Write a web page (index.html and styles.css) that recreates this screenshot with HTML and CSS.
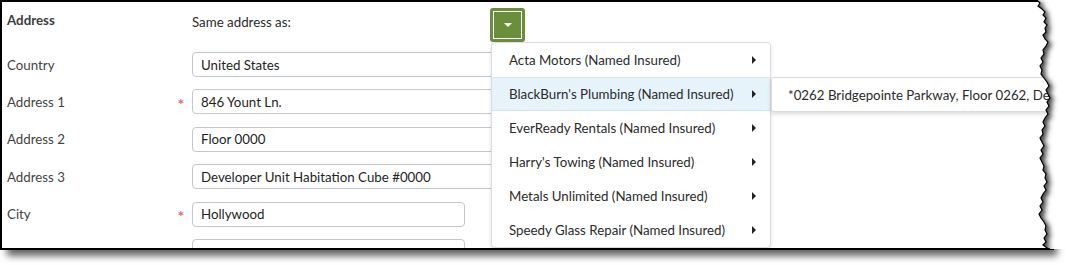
FILE: index.html
```html
<!DOCTYPE html>
<html>
<head>
<meta charset="utf-8">
<link rel="stylesheet" href="styles.css">
</head>
<body>
<div class="wrap">
  <div class="frame">
    <div class="head">
      <div class="section">Address</div>
      <div class="same">Same address as:</div>
      <div class="dd">
        <button class="ddbtn"><span class="caret"></span></button>
        <ul class="menu">
          <li class="item"><span>Acta Motors (Named Insured)</span><i class="arrow"></i></li>
          <li class="item active"><span>BlackBurn's Plumbing (Named Insured)</span><i class="arrow"></i>
            <div class="sub">*0262 Bridgepointe Parkway, Floor 0262, De</div>
          </li>
          <li class="item"><span>EverReady Rentals (Named Insured)</span><i class="arrow"></i></li>
          <li class="item"><span>Harry's Towing (Named Insured)</span><i class="arrow"></i></li>
          <li class="item"><span>Metals Unlimited (Named Insured)</span><i class="arrow"></i></li>
          <li class="item"><span>Speedy Glass Repair (Named Insured)</span><i class="arrow"></i></li>
        </ul>
      </div>
    </div>
    <div class="fields">
      <div class="label">Country</div><div class="req"></div><div class="input wide">United States</div>
      <div class="label">Address 1</div><div class="req">*</div><div class="input wide">846 Yount Ln.</div>
      <div class="label">Address 2</div><div class="req"></div><div class="input wide">Floor 0000</div>
      <div class="label">Address 3</div><div class="req"></div><div class="input wide">Developer Unit Habitation Cube #0000</div>
      <div class="label">City</div><div class="req">*</div><div class="input city">Hollywood</div>
      <div class="label"></div><div class="req"></div><div class="input city"></div>
    </div>
  </div>
  <svg class="torn" viewBox="1000 0 68 265" width="68" height="265" xmlns="http://www.w3.org/2000/svg">
    <defs>
      <clipPath id="coverClip">
        <polygon points="1037,0 1040,3 1038,6 1042,9 1045,12 1043,15 1046,18 1044,22 1047,25 1045,28 1046,32 1043,35 1045,39 1048,42 1046,46 1043,50 1044,54 1041,58 1043,62 1040,66 1042,70 1041,74 1044,78 1047,82 1049,86 1046,90 1048,94 1050,98 1047,102 1049,106 1046,110 1048,114 1045,118 1043,122 1045,126 1042,130 1043,134 1040,138 1042,142 1044,146 1041,150 1043,154 1040,158 1042,162 1044,166 1043,170 1046,174 1045,178 1047,182 1044,186 1046,190 1043,194 1041,198 1043,202 1040,206 1042,210 1039,214 1041,218 1044,222 1046,226 1045,230 1047,234 1044,238 1046,242 1043,245 1047,248 1050,249 1068,249 1068,0"/>
      </clipPath>
      <filter id="blur" filterUnits="userSpaceOnUse" x="990" y="-20" width="90" height="300">
        <feGaussianBlur stdDeviation="2.5"/>
      </filter>
    </defs>
    <polygon class="cover" points="1037,0 1040,3 1038,6 1042,9 1045,12 1043,15 1046,18 1044,22 1047,25 1045,28 1046,32 1043,35 1045,39 1048,42 1046,46 1043,50 1044,54 1041,58 1043,62 1040,66 1042,70 1041,74 1044,78 1047,82 1049,86 1046,90 1048,94 1050,98 1047,102 1049,106 1046,110 1048,114 1045,118 1043,122 1045,126 1042,130 1043,134 1040,138 1042,142 1044,146 1041,150 1043,154 1040,158 1042,162 1044,166 1043,170 1046,174 1045,178 1047,182 1044,186 1046,190 1043,194 1041,198 1043,202 1040,206 1042,210 1039,214 1041,218 1044,222 1046,226 1045,230 1047,234 1044,238 1046,242 1043,245 1047,248 1050,249 1068,249 1068,0"/>
    <g clip-path="url(#coverClip)">
      <polygon class="shade" filter="url(#blur)" transform="translate(4,2)" points="1037,0 1040,3 1038,6 1042,9 1045,12 1043,15 1046,18 1044,22 1047,25 1045,28 1046,32 1043,35 1045,39 1048,42 1046,46 1043,50 1044,54 1041,58 1043,62 1040,66 1042,70 1041,74 1044,78 1047,82 1049,86 1046,90 1048,94 1050,98 1047,102 1049,106 1046,110 1048,114 1045,118 1043,122 1045,126 1042,130 1043,134 1040,138 1042,142 1044,146 1041,150 1043,154 1040,158 1042,162 1044,166 1043,170 1046,174 1045,178 1047,182 1044,186 1046,190 1043,194 1041,198 1043,202 1040,206 1042,210 1039,214 1041,218 1044,222 1046,226 1045,230 1047,234 1044,238 1046,242 1043,245 1047,248 1050,249 1000,249 1000,0"/>
    </g>
    <polyline class="edge" points="1037,0 1040,3 1038,6 1042,9 1045,12 1043,15 1046,18 1044,22 1047,25 1045,28 1046,32 1043,35 1045,39 1048,42 1046,46 1043,50 1044,54 1041,58 1043,62 1040,66 1042,70 1041,74 1044,78 1047,82 1049,86 1046,90 1048,94 1050,98 1047,102 1049,106 1046,110 1048,114 1045,118 1043,122 1045,126 1042,130 1043,134 1040,138 1042,142 1044,146 1041,150 1043,154 1040,158 1042,162 1044,166 1043,170 1046,174 1045,178 1047,182 1044,186 1046,190 1043,194 1041,198 1043,202 1040,206 1042,210 1039,214 1041,218 1044,222 1046,226 1045,230 1047,234 1044,238 1046,242 1043,245 1047,248 1050,249"/>
  </svg>
</div>
</body>
</html>
```

FILE: styles.css
```css
html, body {
  margin: 0;
  padding: 0;
  background: #fff;
}
body {
  font-family: Lato, "Open Sans", sans-serif;
  font-size: 13.3px;
  color: #333;
  width: 1068px;
  height: 265px;
  overflow: hidden;
}
.wrap {
  position: relative;
  width: 1068px;
  height: 265px;
}
.frame {
  position: relative;
  z-index: 1;
  box-sizing: border-box;
  width: 1054px;
  height: 250px;
  border: 2px solid #000;
  border-right: none;
  overflow: hidden;
  box-shadow: 5px 8px 7px -2px rgba(0, 0, 0, 0.6);
  background: #fff;
}
.head {
  display: grid;
  grid-template-columns: 185px 298px auto;
  height: 34px;
  padding: 6px 0 0 5px;
}
.section {
  font-weight: bold;
  color: #3d3d3d;
  padding-top: 4px;
  line-height: 16px;
}
.same {
  padding-top: 6px;
  line-height: 16px;
  color: #2b2b2b;
}
.dd {
  position: relative;
}
.ddbtn {
  display: flex;
  align-items: center;
  justify-content: center;
  width: 35px;
  height: 34px;
  padding: 0;
  border: none;
  border-radius: 3px;
  background: #6a8e3b;
  outline: 1px solid #fff;
  outline-offset: -4px;
}
.caret {
  width: 0;
  height: 0;
  border-left: 4px solid transparent;
  border-right: 4px solid transparent;
  border-top: 4px solid #fff;
  margin-top: -1px;
}
.menu {
  position: absolute;
  top: 34px;
  left: 1px;
  z-index: 5;
  box-sizing: border-box;
  width: 280px;
  margin: 0;
  padding: 0;
  list-style: none;
  background: #fff;
  border: 1px solid #d9dce0;
  border-radius: 4px;
  box-shadow: 0 2px 4px rgba(0, 0, 0, 0.12);
}
.item {
  position: relative;
  display: flex;
  align-items: center;
  justify-content: space-between;
  box-sizing: border-box;
  height: 34px;
  padding: 0 14px 0 17px;
  color: #2b2b2b;
}
.item.active {
  background: #e6f3fb;
  border-top: 1px solid #d3e6f1;
  border-bottom: 1px solid #d3e6f1;
}
.arrow {
  width: 0;
  height: 0;
  border-top: 4px solid transparent;
  border-bottom: 4px solid transparent;
  border-left: 4px solid #222;
}
.sub {
  position: absolute;
  top: -1px;
  left: 279px;
  box-sizing: border-box;
  width: 300px;
  height: 35px;
  display: flex;
  align-items: center;
  padding-left: 16px;
  white-space: nowrap;
  overflow: hidden;
  background: #fff;
  border: 1px solid #d9dce0;
  border-radius: 3px;
  box-shadow: 0 2px 4px rgba(0, 0, 0, 0.15);
  color: #2b2b2b;
}
.fields {
  display: grid;
  grid-template-columns: 163px 22px 1fr;
  grid-auto-rows: 25px;
  row-gap: 12.4px;
  margin-top: 10px;
  padding-left: 5px;
}
.label {
  display: flex;
  align-items: center;
  color: #444;
}
.req {
  display: flex;
  align-items: center;
  justify-content: center;
  color: #e06a6a;
  font-size: 16px;
  font-weight: bold;
  padding-top: 3px;
}
.input {
  box-sizing: border-box;
  height: 25px;
  display: flex;
  align-items: center;
  padding-left: 8px;
  border: 1px solid #c3c7ce;
  border-radius: 4px;
  color: #1e1e1e;
  background: #fff;
}
.input.wide {
  width: 480px;
}
.input.city {
  width: 273px;
}
.torn {
  position: absolute;
  z-index: 10;
  left: 1000px;
  top: 0;
}
.cover {
  fill: #fff;
}
.shade {
  fill: #444;
}
.edge {
  fill: none;
  stroke: #000;
  stroke-width: 1.2;
}
```
